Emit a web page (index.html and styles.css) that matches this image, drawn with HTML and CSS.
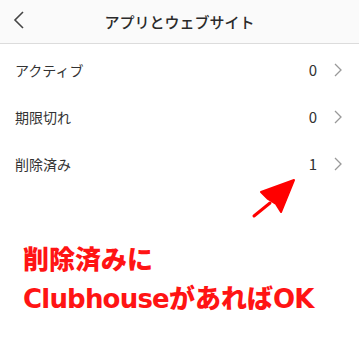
FILE: index.html
```html
<!DOCTYPE html>
<html lang="ja">
<head>
<meta charset="utf-8">
<link rel="stylesheet" href="styles.css">
</head>
<body>
<div class="screen">
  <header class="topbar">
    <svg class="back" width="12" height="20" viewBox="0 0 12 20"><path d="M10 2 L2 10 L10 18" fill="none" stroke="#444" stroke-width="1.6"/></svg>
    <h1 class="title">アプリとウェブサイト</h1>
  </header>
  <ul class="list">
    <li class="row"><span class="label">アクティブ</span><span class="count">0</span><svg class="chev" width="8" height="14" viewBox="0 0 8 14"><path d="M1 1 L7 7 L1 13" fill="none" stroke="#999" stroke-width="1.3"/></svg></li>
    <li class="row"><span class="label">期限切れ</span><span class="count">0</span><svg class="chev" width="8" height="14" viewBox="0 0 8 14"><path d="M1 1 L7 7 L1 13" fill="none" stroke="#999" stroke-width="1.3"/></svg></li>
    <li class="row"><span class="label">削除済み</span><span class="count">1</span><svg class="chev" width="8" height="14" viewBox="0 0 8 14"><path d="M1 1 L7 7 L1 13" fill="none" stroke="#999" stroke-width="1.3"/></svg></li>
  </ul>
  <svg class="arrow" width="50" height="42" viewBox="0 0 50 42"><path d="M5 38 L21 25" stroke="#ff0000" stroke-width="3" stroke-linecap="round"/><path d="M12 14 L45 2 L32 34 L27 26 L19 21 Z" fill="#ff0000" stroke="#ff0000" stroke-width="2" stroke-linejoin="round"/></svg>
  <p class="note">削除済みに<br><span class="latin">Clubhouse</span>があれば<span class="latin">OK</span></p>
</div>
</body>
</html>
```
FILE: styles.css
```css
* { box-sizing: border-box; }
html, body { margin: 0; padding: 0; background: #fff; }
body { font-family: "Noto Sans CJK JP", "Noto Sans", sans-serif; width: 359px; height: 362px; overflow: hidden; }
.screen { position: relative; width: 359px; height: 362px; }
.topbar { height: 44px; display: flex; align-items: center; justify-content: center; position: relative; border-bottom: 1px solid #dcdcdc; background: #fafafa; }
.back { position: absolute; left: 13px; top: 10px; }
.title { margin: 0; font-size: 15px; font-weight: 500; color: #2a2a2a; letter-spacing: 0; }
.list { list-style: none; margin: 0; padding: 0 15px 0 15px; }
.row { height: 47px; display: flex; align-items: center; font-size: 14px; color: #333; }
.row:first-child { margin-top: 2px; }
.label { flex: 1; }
.count { font-size: 15px; color: #333; margin-right: 17px; }
.chev { margin-right: 2px; }
.arrow { position: absolute; left: 249px; top: 178px; }
.note { margin: 0; position: absolute; left: 23px; top: 241px; font-family: "DejaVu Sans", "Noto Sans CJK JP", sans-serif; font-size: 26px; line-height: 39px; font-weight: 900; color: #ff1414; }
.latin { letter-spacing: -0.8px; }
```
